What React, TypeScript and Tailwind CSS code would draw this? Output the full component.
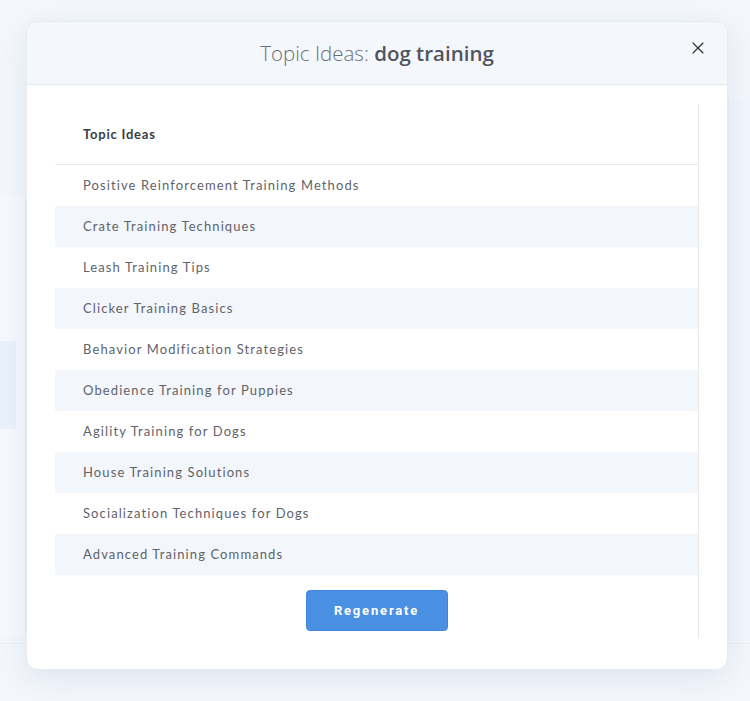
import { X } from "lucide-react";

const topics = [
  "Positive Reinforcement Training Methods",
  "Crate Training Techniques",
  "Leash Training Tips",
  "Clicker Training Basics",
  "Behavior Modification Strategies",
  "Obedience Training for Puppies",
  "Agility Training for Dogs",
  "House Training Solutions",
  "Socialization Techniques for Dogs",
  "Advanced Training Commands",
];

function Backdrop() {
  // faint page content behind the overlay
  return (
    <div className="absolute inset-0 overflow-hidden bg-[#f4f7fc]">
      <div className="absolute left-0 top-[196px] h-[440px] w-[26px] border-r border-[#e9eef6] bg-[#f7f9fd]">
        <div className="mt-[145px] h-[88px] w-[16px] bg-[#eaf1fb]" />
      </div>
      <div className="absolute right-0 top-[100px] h-[540px] w-[22px] border-l border-[#e9eef6] bg-[#f2f6fc]" />
      <div className="absolute left-0 right-0 top-[643px] h-px bg-[#e8edf5]" />
    </div>
  );
}

export default function App() {
  return (
    <div
      className="relative h-[701px] w-[750px] overflow-hidden"
      style={{ fontFamily: "Lato, 'Open Sans', sans-serif" }}
    >
      <Backdrop />
      <div className="relative pl-[26px] pt-[21px]">
        <div className="flex h-[649px] w-[702px] flex-col overflow-hidden rounded-[12px] border border-[#e6eaf1] bg-white shadow-[0_8px_30px_rgba(160,175,200,0.25)]">
          <div className="relative flex h-[63px] shrink-0 items-center justify-center border-b border-[#e4e8ef] bg-[#f4f7fb]">
            <h2
              className="text-[20.5px] text-[#6b7079]"
              style={{ fontFamily: "'Open Sans', sans-serif", fontWeight: 300 }}
            >
              Topic Ideas: <span className="font-semibold text-[#50555e]">dog training</span>
            </h2>
            <button className="absolute right-[19px] top-[16px] text-[#2b2f36]">
              <X size={20} strokeWidth={1.4} />
            </button>
          </div>
          <div className="flex flex-1 flex-col px-[28px] pt-[20px]">
            <div className="flex h-[533px] w-[644px] flex-col border-r border-[#e9e9ea]">
              <div className="flex h-[60px] shrink-0 items-center border-b border-[#e6ecf4] px-[28px] text-[13px] font-bold tracking-[0.06em] text-[#3a3d42]">
                Topic Ideas
              </div>
              {topics.map((t, i) => (
                <div
                  key={t}
                  className={`flex h-[41px] shrink-0 items-center px-[28px] text-[13px] tracking-[0.085em] text-[#5f636a] ${
                    i % 2 === 1 ? "bg-[#f3f6fa]" : "bg-white"
                  }`}
                >
                  {t}
                </div>
              ))}
              <div className="flex justify-center pt-[15px]">
                <button
                  className="h-[41px] w-[142px] rounded-[4px] border border-[#3f87de] bg-[#4a90e2] text-[13px] font-bold tracking-[0.14em] text-white"
                  style={{ fontFamily: "Roboto, sans-serif" }}
                >
                  Regenerate
                </button>
              </div>
            </div>
          </div>
        </div>
      </div>
    </div>
  );
}
